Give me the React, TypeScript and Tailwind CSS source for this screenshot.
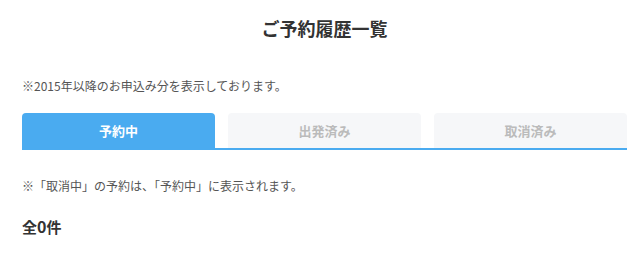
export default function App() {
    const tabs = ['予約中', '出発済み', '取消済み'];

    return (
        <div
            className="w-[640px] h-[256px] bg-white overflow-hidden text-[#333]"
            style={{ fontFamily: '"Noto Sans CJK JP", "Noto Sans", sans-serif' }}
        >
            <div className="pl-[22px] pr-[13px]">
                {/* タイトル */}
                <h1 className="pt-[15px] text-center text-[18px] leading-[26px] font-bold text-[#333]">
                    ご予約履歴一覧
                </h1>

                <p className="mt-[36px] text-[12px] leading-[18px] text-[#555]">
                    ※2015年以降のお申込み分を表示しております。
                </p>

                {/* タブ */}
                <div className="mt-[18px] flex gap-[13px] border-b-2 border-[#4aabf0]">
                    {tabs.map((tab, i) => (
                        <div
                            key={tab}
                            className={`flex-1 h-[35px] flex items-center justify-center rounded-t-[4px] text-[13px] font-bold ${
                                i === 0
                                    ? 'bg-[#4aabf0] text-white'
                                    : 'bg-[#f6f7f9] text-[#bbbbbb]'
                            }`}
                        >
                            {tab}
                        </div>
                    ))}
                </div>

                <p className="mt-[27px] text-[12px] leading-[18px] text-[#555]">
                    ※「取消中」の予約は、「予約中」に表示されます。
                </p>

                <p className="mt-[21px] text-[15px] leading-[20px] font-bold text-[#333]">
                    全<span className="text-[16px]">0</span>件
                </p>
            </div>
        </div>
    );
}
